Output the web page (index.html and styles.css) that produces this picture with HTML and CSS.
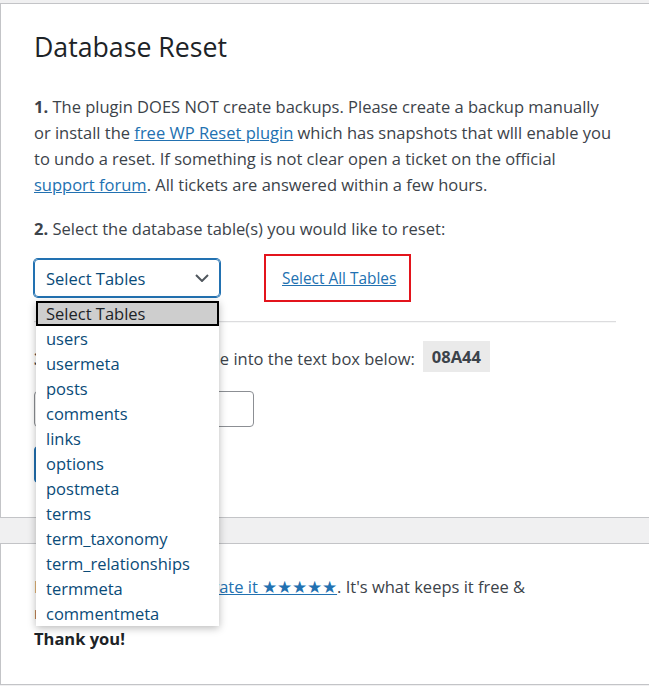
FILE: index.html
```html
<!DOCTYPE html>
<html lang="en">
<head>
<meta charset="utf-8">
<title>Database Reset</title>
<link rel="stylesheet" href="styles.css">
</head>
<body>
<div class="wrap">
  <section class="card">
    <h1 class="title">Database Reset</h1>
    <p class="text"><b>1.</b> The plugin DOES NOT create backups. Please create a backup manually or install the <a href="#">free WP Reset plugin</a> which has snapshots that wlll enable you to undo a reset. If something is not clear open a ticket on the official <a href="#">support forum</a>. All tickets are answered within a few hours.</p>
    <p class="text step2"><b>2.</b> Select the database table(s) you would like to reset:</p>
    <div class="select-row">
      <div class="select-wrap">
        <div class="select">
          <span>Select Tables</span>
          <svg class="chev" width="14" height="8" viewBox="0 0 14 8"><path d="M1 1l6 6 6-6" fill="none" stroke="#50575e" stroke-width="2"/></svg>
        </div>
        <ul class="listbox">
          <li class="opt active">Select Tables</li>
          <li class="opt">users</li>
          <li class="opt">usermeta</li>
          <li class="opt">posts</li>
          <li class="opt">comments</li>
          <li class="opt">links</li>
          <li class="opt">options</li>
          <li class="opt">postmeta</li>
          <li class="opt">terms</li>
          <li class="opt">term_taxonomy</li>
          <li class="opt">term_relationships</li>
          <li class="opt">termmeta</li>
          <li class="opt">commentmeta</li>
        </ul>
      </div>
      <div class="select-all"><a href="#">Select All Tables</a></div>
    </div>
    <hr class="sep">
    <p class="text step3"><span><b>3.</b> Enter the security code into the text box below:</span><code class="code">08A44</code></p>
    <input class="field" type="text">
    <div class="actions"><button class="btn">Reset Tables</button></div>
  </section>
  <section class="card card2">
    <p class="text">If you liked this, please <a href="#">rate it ★★★★★</a>. It's what keeps it free &amp;<br>maintained.<br><b class="thanks">Thank you!</b></p>
  </section>
</div>
</body>
</html>
```
FILE: styles.css
```css
html, body {
  margin: 0;
  padding: 0;
  background: #f0f0f1;
  overflow: hidden;
}
body {
  font-family: "Open Sans", "Noto Sans", sans-serif;
  color: #3c434a;
}
.wrap {
  padding-top: 3px;
  display: flex;
  flex-direction: column;
  gap: 25px;
}
.card {
  background: #fff;
  border: 1px solid #c3c4c7;
  border-right: none;
  padding: 25px 33px 34px 33px;
  display: flex;
  flex-direction: column;
  align-items: flex-start;
}
.title {
  margin: 0 0 29px;
  font-size: 26.7px;
  line-height: 36px;
  font-weight: 400;
  color: #1d2327;
}
.text {
  margin: 0;
  font-size: 16.5px;
  line-height: 26px;
}
.text b { font-weight: 700; }
a { color: #2271b1; text-decoration: underline; }
.step2 { margin-top: 18px; }
.select-row {
  margin-top: 12px;
  display: flex;
  align-items: center;
  gap: 44px;
  position: relative;
  z-index: 2;
}
.select-wrap { position: relative; }
.select {
  box-sizing: border-box;
  width: 186px;
  height: 38px;
  border: 1px solid #2271b1;
  box-shadow: 0 0 0 1px #2271b1;
  border-radius: 4px;
  display: flex;
  align-items: center;
  justify-content: space-between;
  padding: 0 10px 0 11px;
  font-size: 16.5px;
  color: #0a4b78;
}
.chev { display: block; }
.listbox {
  position: absolute;
  left: 2px;
  top: 42px;
  width: 183px;
  margin: 0;
  padding: 0;
  list-style: none;
  background: #fff;
  box-shadow: 0 2px 8px rgba(0,0,0,.28);
}
.opt {
  box-sizing: border-box;
  height: 25px;
  line-height: 25px;
  padding-left: 10px;
  font-size: 16.5px;
  color: #0a4b78;
  white-space: nowrap;
}
.opt.active {
  background: #cecece;
  border: 2px solid #000;
  padding-left: 8px;
  line-height: 21px;
  color: #1d2327;
}
.select-all {
  box-sizing: border-box;
  height: 48px;
  border: 2px solid #e3141c;
  display: flex;
  align-items: center;
  padding: 0 13px 0 16px;
  font-size: 15.4px;
}
.sep {
  align-self: stretch;
  margin: 19px 0 0;
  border: 0;
  border-top: 1px solid #dcdcde;
  border-bottom: 1px solid #f6f7f7;
}
.step3 {
  margin-top: 18px;
  display: flex;
  align-items: flex-end;
  gap: 8px;
}
.code {
  font-family: "Open Sans", "Noto Sans", sans-serif;
  font-weight: 700;
  font-size: 16.5px;
  line-height: 31px;
  padding: 0 9px;
  background: #eaeaea;
  color: #3c434a;
}
.field {
  box-sizing: border-box;
  margin: 19px 0 0;
  width: 220px;
  height: 36px;
  border: 1px solid #8c8f94;
  border-radius: 4px;
  background: #fff;
}
.actions { margin-top: 19px; }
.btn {
  box-sizing: border-box;
  height: 37px;
  padding: 0 14px;
  border: 1px solid #2271b1;
  border-radius: 4px;
  background: #2271b1;
  color: #fff;
  font-family: inherit;
  font-size: 16px;
}
.card2 { padding: 30px 33px 32px 33px; }
.thanks { color: #1d2327; }
```
